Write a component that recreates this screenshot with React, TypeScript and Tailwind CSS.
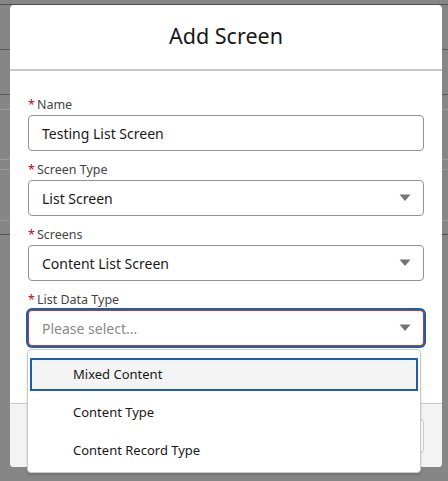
import React from "react";

const font = { fontFamily: '"Noto Sans", "Open Sans", sans-serif' };

function Label({ text }: { text: string }) {
  return (
    <div className="flex h-[20px] items-center text-[12.5px] leading-[20px] text-[#444444]">
      <span className="mr-[2px] text-[#ba0517]">*</span>
      <span>{text}</span>
    </div>
  );
}

function Caret() {
  return (
    <svg width="12" height="8" viewBox="0 0 12 8" className="shrink-0">
      <path d="M0.5 0.5 L11.5 0.5 L6 7 Z" fill="#747474" />
    </svg>
  );
}

function Field({
  label,
  value,
  select,
  focused,
  placeholder,
}: {
  label: string;
  value?: string;
  select?: boolean;
  focused?: boolean;
  placeholder?: string;
}) {
  return (
    <div className="flex flex-col">
      <Label text={label} />
      <div
        className={
          focused
            ? "flex h-[36px] items-center justify-between rounded-[4px] border border-[#c23934] bg-white pl-[13px] pr-[12px] shadow-[0_0_0_2px_#1b5fac]"
            : "flex h-[36px] items-center justify-between rounded-[4px] border border-[#939393] bg-white pl-[13px] pr-[12px]"
        }
      >
        <span
          className={
            value
              ? "text-[14px] text-[#181818]"
              : "text-[14px] text-[#8a8a8a]"
          }
        >
          {value ?? placeholder}
        </span>
        {select && <Caret />}
      </div>
    </div>
  );
}

export default function App() {
  return (
    <div
      className="relative h-[481px] w-[448px] overflow-hidden bg-[#868686]"
      style={font}
    >
      {/* page behind the backdrop */}
      <div className="flex flex-col">
        <div className="h-[5px] border-b border-[#4f4f4f]" />
        <div className="h-[45px] border-b border-[#5a5a5a]" />
        <div className="h-[45px] border-b border-[#5a5a5a]" />
        <div className="h-[15px] border-b border-[#9a9a9a]" />
        <div className="h-[50px] border-b border-[#9a9a9a]" />
        <div className="h-[10px] border-b border-[#9a9a9a]" />
        <div className="h-[51px] border-b border-[#9a9a9a]" />
        <div className="h-[14px] border-b border-[#4f4f4f]" />
      </div>

      {/* modal */}
      <div className="absolute left-[10px] top-[5px] flex w-[432px] flex-col overflow-hidden rounded-[4px] bg-white">
        <div className="flex h-[66px] items-center justify-center border-b-2 border-[#c9c9c9] pb-[1px]">
          <h2 className="text-[21.5px] font-normal text-[#181818]">Add Screen</h2>
        </div>
        <div className="flex flex-col gap-[9px] px-[18px] pb-[57px] pt-[24px]">
          <Field label="Name" value="Testing List Screen" />
          <Field label="Screen Type" value="List Screen" select />
          <Field label="Screens" value="Content List Screen" select />
          <Field
            label="List Data Type"
            placeholder="Please select..."
            select
            focused
          />
        </div>
        <div className="flex h-[64px] items-center justify-end border-t border-[#c9c9c9] bg-[#f3f3f3] px-[18px]">
          <button className="h-[34px] rounded-[4px] border border-[#c9c9c9] bg-white px-[16px] text-[13px] text-[#0176d3]">
            Cancel
          </button>
        </div>
      </div>

      {/* dropdown */}
      <div className="absolute left-[27px] top-[349px] flex w-[394px] flex-col gap-[5px] rounded-[4px] border border-[#c9c9c9] bg-white pb-[5px] pl-[2px] pr-[2px] pt-[8px] shadow-[0_2px_3px_rgba(0,0,0,0.16)]">
        <div className="flex h-[33px] items-center border-2 border-[#1b5fac] bg-[#f3f3f3] pl-[41px] text-[13px] text-[#181818]">
          Mixed Content
        </div>
        <div className="flex h-[33px] items-center border-2 border-transparent pl-[41px] text-[13px] text-[#181818]">
          Content Type
        </div>
        <div className="flex h-[33px] items-center border-2 border-transparent pl-[41px] text-[13px] text-[#181818]">
          Content Record Type
        </div>
      </div>
    </div>
  );
}
